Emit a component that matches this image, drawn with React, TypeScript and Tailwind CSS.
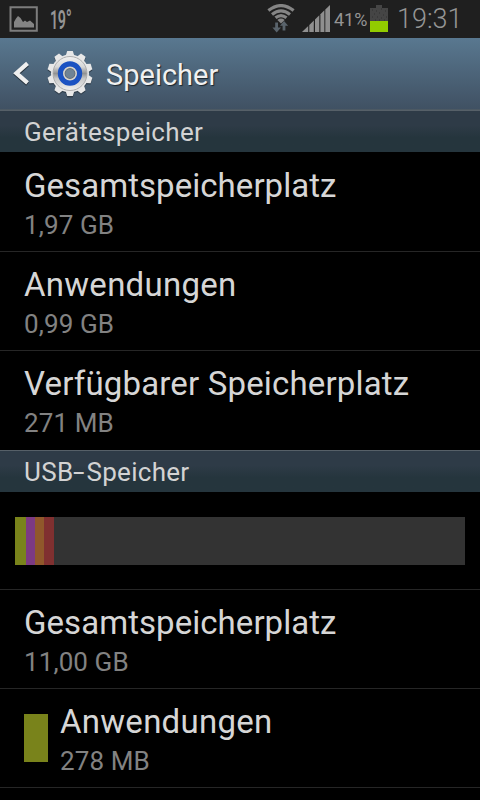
import React from "react";

interface StorageRowProps {
  title: string;
  value: string;
  swatch?: string;
  tracking?: string;
  height?: string;
  last?: boolean;
}

const usage = [
  { size: 11, color: "bg-[#79831b]" },
  { size: 9, color: "bg-[#7c3a83]" },
  { size: 9, color: "bg-[#90582b]" },
  { size: 10, color: "bg-[#803030]" },
];

const teeth = [0, 36, 72, 108, 144, 180, 216, 252, 288, 324];

const GearIcon = () => (
  <svg width="50" height="50" viewBox="0 0 50 50" className="shrink-0">
    <defs>
      <linearGradient id="metal" x1="0" y1="0" x2="0" y2="1">
        <stop offset="0" stopColor="#f2f2f2" />
        <stop offset="0.3" stopColor="#d8d8d8" />
        <stop offset="0.5" stopColor="#929292" />
        <stop offset="0.65" stopColor="#c8c8c8" />
        <stop offset="1" stopColor="#f0f0f0" />
      </linearGradient>
    </defs>
    <g fill="#2f3d4a" transform="translate(25 25.8)">
      <circle r="19" />
      {teeth.map((a) => (
        <path key={a} d="M-4.2-18L-2.8-22.6H2.8L4.2-18Z" transform={`rotate(${a})`} />
      ))}
    </g>
    <g fill="#e8e8e8" transform="translate(25 24.5)">
      <circle r="19" />
      {teeth.map((a) => (
        <path key={a} d="M-4.2-18L-2.8-22.6H2.8L4.2-18Z" transform={`rotate(${a})`} />
      ))}
      <circle r="17" fill="url(#metal)" stroke="#a8a8a8" strokeWidth="0.9" />
      <circle r="9.4" fill="none" stroke="#1b52c2" strokeWidth="5.6" />
      <circle r="6.2" fill="#626c76" stroke="#d9d5cc" strokeWidth="1.5" />
      <circle r="4.6" fill="#6f8395" />
    </g>
  </svg>
);

const WifiIcon = () => (
  <svg width="28" height="30" viewBox="0 0 28 30" className="shrink-0">
    <g fill="none" stroke="#858585" strokeWidth="3.2">
      <path d="M1.4 6.6Q14-3.4 26.6 6.6" />
      <path d="M5 10.4Q14 3.2 23 10.4" />
      <path d="M8.5 13.8Q14 9.4 19.5 13.8" />
    </g>
    <path d="M10.4 16Q14 13.2 17.6 16L14 19.5Z" fill="#858585" />
    <path d="M8.2 18.5H11V23.5H14L9.7 28.5L5.4 23.5H8.2Z" fill="#59636b" />
    <path d="M15.6 26.5V21.8H13L17 17L21.2 21.8H18.4V26.5Z" fill="#59636b" />
  </svg>
);

const SignalIcon = () => (
  <svg width="29" height="28" viewBox="0 0 29 28" className="shrink-0">
    <g fill="#8f8f8f">
      <path d="M0 27L6.2 21V27Z" />
      <path d="M7.3 19.9L11.8 15.6V27H7.3Z" />
      <path d="M13 14.4L17.3 10.2V27H13Z" />
      <path d="M18.4 9.2L22.4 5.3V27H18.4Z" />
      <path d="M23.3 4.4L28 0V27H23.3Z" />
    </g>
  </svg>
);

const BatteryIcon = () => (
  <svg width="18" height="27" viewBox="0 0 18 27" className="shrink-0">
    <path d="M0 3H6V0H12V3H18V16H0Z" fill="#454545" />
    <path
      d="M2 5H3M6 6H7M11 4H12M15 6H16M4 9H5M9 8H10M13 10H14M2 12H3M7 12H8M11 13H12M16 12H17M5 15H6M9 15H10M14 15H15"
      stroke="#303030"
      strokeWidth="1"
    />
    <path d="M0 16H18V27H0Z" fill="#92cc00" />
  </svg>
);

const StatusBar = () => (
  <div className="flex h-[38px] shrink-0 items-start bg-[#1f1f1f] text-[#959595]">
    <svg width="29" height="26" viewBox="0 0 29 26" className="mt-[6px] ml-[9px] shrink-0">
      <path d="M1.5 1.2H27.8V24.8H1.5Z" fill="none" stroke="#7d7d7d" strokeWidth="2" />
      <path
        d="M5 21.5V16L7 12.5L9 10L11.5 12L14 16L16 14.5L18 16L21 14.5L25 18V21.5Z"
        fill="#848484"
      />
    </svg>
    <span className="mt-[8px] ml-[12px] w-[32px] origin-left scale-x-[0.57] text-[25px] leading-6 font-semibold tracking-[-0.5px] whitespace-nowrap">
      19<span className="text-[28px]">°</span>
    </span>
    <div className="ml-auto flex items-start">
      <div className="mt-[4px] mr-[7px]">
        <WifiIcon />
      </div>
      <div className="mt-[5px]">
        <SignalIcon />
      </div>
      <span className="mt-[10px] ml-[3px] w-[35px] text-[18px] leading-5 whitespace-nowrap">
        41%
      </span>
      <div className="mt-[5px] ml-[1px]">
        <BatteryIcon />
      </div>
      <span className="mt-[5px] ml-[9px] w-[83px] text-[27px] leading-7 font-[350] whitespace-nowrap">
        19:31
      </span>
    </div>
  </div>
);

const SectionHeader = ({ children }: { children: React.ReactNode }) => (
  <div className="flex h-[42px] shrink-0 items-center border-t border-[#566068] bg-linear-to-b from-[#2e3b47] from-35% to-[#25353d] to-65% pt-[2px] pl-6 text-[26px] tracking-[0.3px] text-[#d3d3d3]">
    {children}
  </div>
);

const StorageRow: React.FC<StorageRowProps> = ({
  title,
  value,
  swatch,
  tracking = "tracking-[0.05px]",
  height = "h-[99px] pt-[3px]",
  last,
}) => (
  <div
    className={`flex shrink-0 items-start gap-3 pl-6 ${height} ${
      last ? "" : "border-b border-[#262626]"
    }`}
  >
    {swatch && <div className={`mt-[22px] h-12 w-6 ${swatch}`} />}
    <div className="mt-[9px] flex flex-col whitespace-nowrap">
      <span className={`text-[33px] leading-[42px] text-[#d6d6d6] ${tracking}`}>{title}</span>
      <span className="text-[26px] leading-9 tracking-[0.1px] text-[#828282]">{value}</span>
    </div>
  </div>
);

export default function App() {
  return (
    <div className="flex h-[800px] w-[480px] flex-col overflow-hidden bg-black font-[Roboto,sans-serif]">
      <StatusBar />
      <header className="flex h-[72px] shrink-0 items-center border-b border-[#4c5963] bg-linear-to-b from-[#597890] to-[#405163] pl-[13px]">
        <svg width="18" height="25" viewBox="0 0 18 25" fill="none" strokeWidth="4.2">
          <path d="M14.5 3.8L3.4 13.6L14.5 23.2" stroke="#26323d" />
          <path d="M14.5 2.4L3.4 12.2L14.5 21.8" stroke="#efefef" />
        </svg>
        <div className="ml-[14px]">
          <GearIcon />
        </div>
        <h1 className="ml-[11px] pt-[4px] text-[29px] text-[#f0f0f0] [text-shadow:1px_1px_1px_#1c252d]">
          Speicher
        </h1>
      </header>
      <SectionHeader>Gerätespeicher</SectionHeader>
      <StorageRow title="Gesamtspeicherplatz" value="1,97 GB" height="h-[100px] pt-[4px]" />
      <StorageRow title="Anwendungen" value="0,99 GB" tracking="tracking-[0.27px]" />
      <StorageRow
        title="Verfügbarer Speicherplatz"
        value="271 MB"
        tracking="tracking-[0.17px]"
        last
      />
      <SectionHeader>
        USB
        <span className="w-[13px] origin-left scale-x-[1.6]">-</span>
        Speicher
      </SectionHeader>
      <div className="flex h-[98px] shrink-0 items-center border-b border-[#262626] px-[15px]">
        <div className="flex h-12 flex-1 bg-[#333333]">
          {usage.map(({ size, color }) => (
            <div key={color} className={color} style={{ width: size }} />
          ))}
        </div>
      </div>
      <StorageRow title="Gesamtspeicherplatz" value="11,00 GB" />
      <StorageRow
        title="Anwendungen"
        value="278 MB"
        tracking="tracking-[0.27px]"
        swatch="bg-[#79831b]"
      />
    </div>
  );
}
